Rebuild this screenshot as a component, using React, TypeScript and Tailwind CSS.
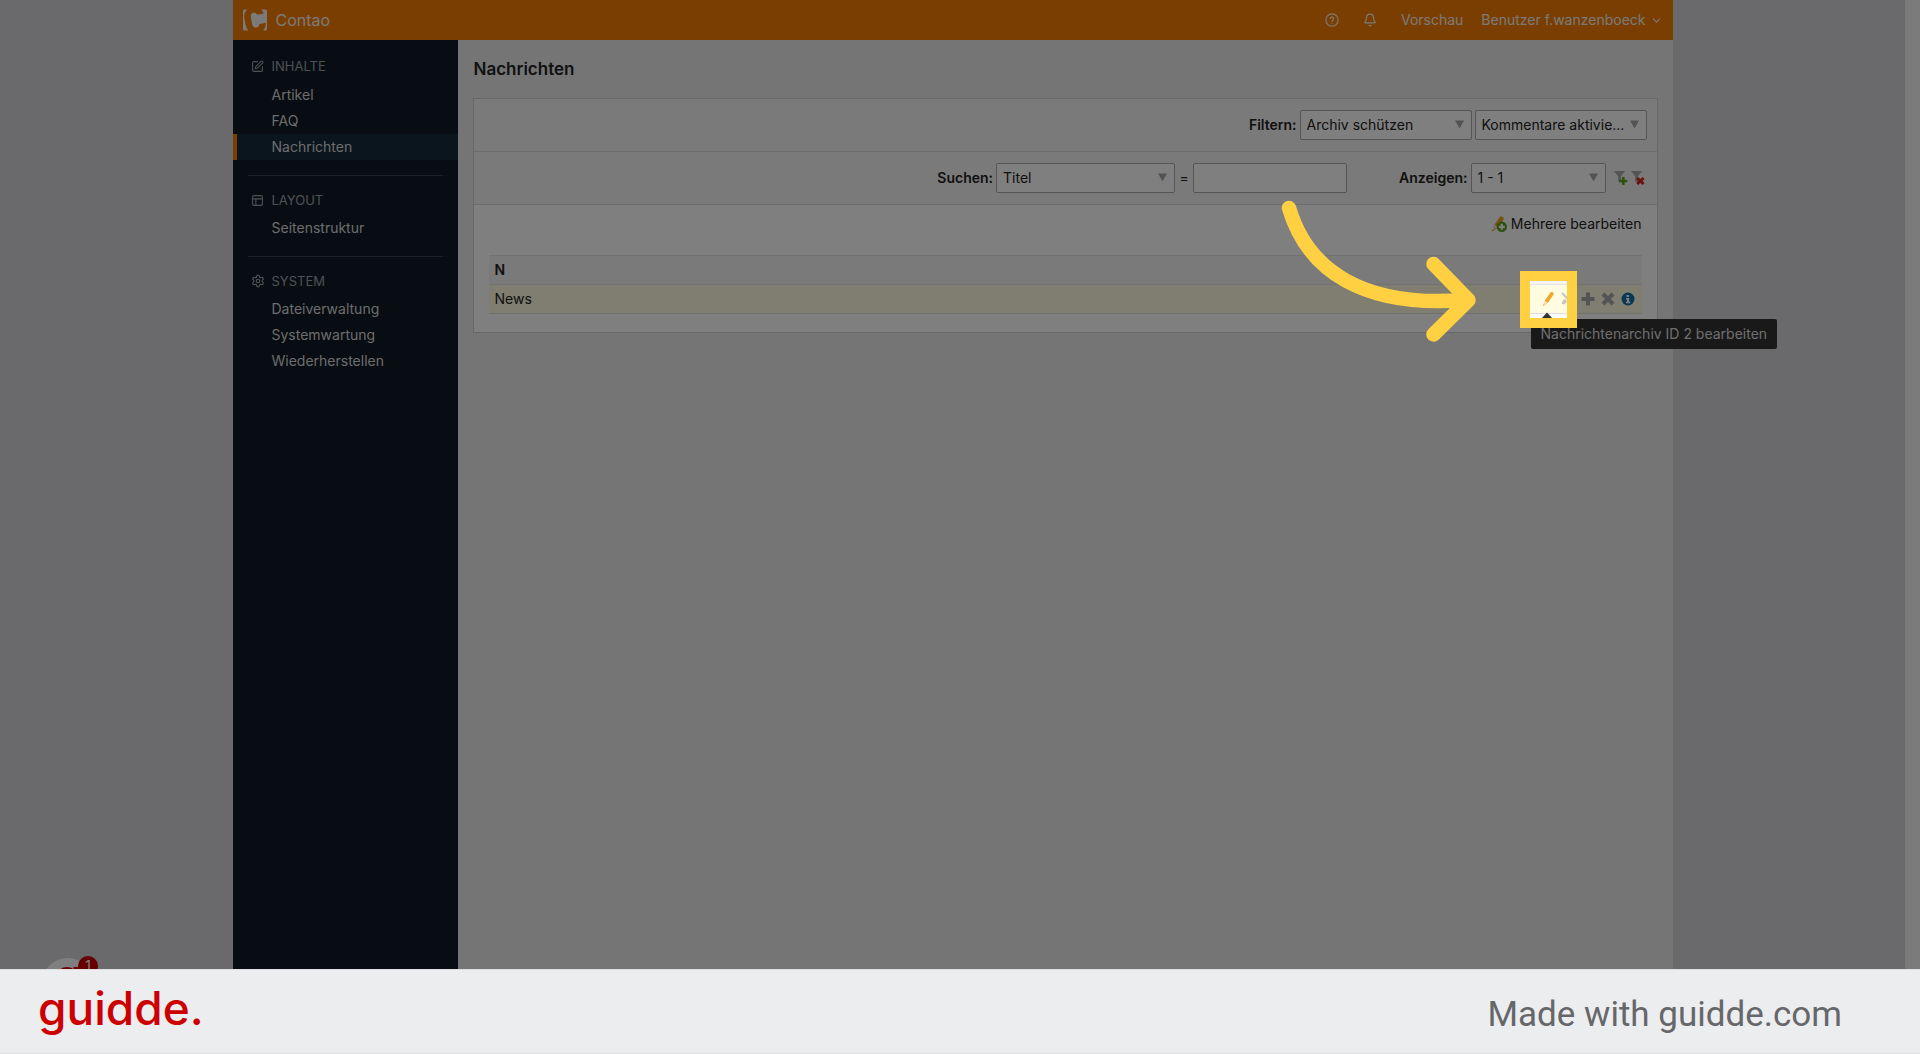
import type { ReactNode } from "react";
import { Bell, ChevronDown, PanelsTopLeft, Settings, SquarePen } from "lucide-react";
import { SiContao } from "react-icons/si";

type Group = { title: string; icon: ReactNode; items: string[] };

const groups: Group[] = [
  { title: "INHALTE", icon: <SquarePen size={13} strokeWidth={2} />, items: ["Artikel", "FAQ", "Nachrichten"] },
  { title: "LAYOUT", icon: <PanelsTopLeft size={13} strokeWidth={2} />, items: ["Seitenstruktur"] },
  { title: "SYSTEM", icon: <Settings size={14} strokeWidth={2} />, items: ["Dateiverwaltung", "Systemwartung", "Wiederherstellen"] },
];

function HelpIcon() {
  return (
    <svg width="14" height="14" viewBox="0 0 24 24" fill="none" stroke="currentColor" strokeWidth="2" strokeLinecap="round" strokeLinejoin="round">
      <circle cx="12" cy="12" r="10.5" />
      <path d="M9 9.3a3 3 0 0 1 5.9.8c0 2-2.9 2.4-2.9 4.2M12 17.4v.1" />
    </svg>
  );
}

function Pencil() {
  return (
    <svg width="16" height="16" viewBox="0 0 16 16">
      <path d="M10.3 1.6c.5-.7 1.2-.9 1.9-.5l1 .6c.7.5.8 1.2.4 1.9l-5.8 8.3-3.200-2z" fill="#f0a830" />
      <path d="M4.200 10.500l3 2-3.600 2.400-.5-.3z" fill="#f7d9a6" />
      <path d="M3.300 13.200l1.300.9-1.700 1z" fill="#f0a830" />
    </svg>
  );
}

function PencilPlus() {
  return (
    <svg width="16" height="16" viewBox="0 0 16 16">
      <path d="M8.800.9c.4-.7 1.100-.9 1.800-.5l1.600 1c.7.4.8 1.100.4 1.800L7.500 11.500 3.300 9z" fill="#f0a020" />
      <path d="M2.800 9.800l3.700 2.400-4.200 2.800z" fill="#e8c9a0" />
      <path d="M1.200 13.300l2 1.300-2.300 1z" fill="#f0a020" />
      <circle cx="10.800" cy="10.800" r="4.200" fill="#fff" stroke="#58a618" strokeWidth="2" />
      <circle cx="10.800" cy="10.800" r="4" fill="#58a618" />
      <path d="M10.800 7.800v6M7.800 10.800h6" stroke="#fff" strokeWidth="2.200" />
    </svg>
  );
}

function Funnel({ reset }: { reset?: boolean }) {
  return (
    <svg width="14" height="16" viewBox="0 0 14 16">
      <path d="M0 1h11L7 6.200V13L4.200 11V6.200z" fill="#a9a9ac" />
      {reset ? (
        <path d="M6.200 8l6.400 6M12.600 8l-6.400 6" stroke="#d5251b" strokeWidth="3" />
      ) : (
        <path d="M9.300 7v8M5.300 11h8" stroke="#5ba51a" strokeWidth="2.600" />
      )}
    </svg>
  );
}

function Select({ label, value, width }: { label: string; value: string; width: string }) {
  return (
    <span className={`relative block ${width}`}>
      <select
        aria-label={label}
        className="block h-[30px] w-full appearance-none rounded-xs border border-[#aaaaaa] bg-white pr-5 pl-1.5 text-sm text-[#222222]"
      >
        <option>{value}</option>
      </select>
      <svg className="pointer-events-none absolute top-2.5 right-2" width="9" height="9" viewBox="0 0 9 9">
        <path d="M0 .5h9L4.500 8.500z" fill="#a6a6a6" />
      </svg>
    </span>
  );
}

function Sidebar() {
  return (
    <nav className="w-[225px] shrink-0 bg-[#101a27] text-sm text-[#d8d8d8]">
      {groups.map((g, i) => (
        <section key={g.title}>
          {i > 0 && <hr className="mx-[15px] border-[#3a444c]" />}
          <h2
            className={`flex items-center gap-[7px] pl-[18px] text-[13px] leading-4 text-[#9da3a8] ${i === 0 ? "pt-[18px] pb-2" : "pt-4 pb-[7px]"}`}
          >
            <span className="flex w-3.5 justify-center">{g.icon}</span>
            {g.title}
          </h2>
          <ul className="pb-[15px]">
            {g.items.map((item) => (
              <li key={item}>
                <a
                  href="#"
                  className={`block border-l-4 pl-[35px] leading-[26px] ${item === "Nachrichten" ? "border-[#f47c00] bg-[#172b3b]" : "border-transparent"}`}
                >
                  {item}
                </a>
              </li>
            ))}
          </ul>
        </section>
      ))}
    </nav>
  );
}

function Spotlight() {
  return (
    <>
      <span className="pointer-events-none absolute top-7 -left-[9px] z-10 rounded-xs bg-[#333333] px-2.5 text-sm leading-[30px] whitespace-nowrap text-[#dddddd]">
        Nachrichtenarchiv ID 2 bearbeiten
        <svg className="absolute -top-[7px] left-2.5" width="12" height="7" viewBox="0 0 12 7">
          <path d="M0 7l6-6.500L12 7z" fill="#333333" />
        </svg>
      </span>
      <span className="pointer-events-none absolute -top-2.5 -left-2.5 z-20 size-[37px] shadow-[0_0_0_9999px_rgba(0,0,0,0.5)]" />
      <span className="pointer-events-none absolute -top-5 -left-5 z-30 size-[57px] border-10 border-[#ffd042]" />
      <svg
        className="pointer-events-none absolute -top-[111px] -left-[280px] z-30 max-w-none"
        width="260"
        height="180"
        viewBox="0 0 260 180"
        fill="none"
        stroke="#ffd042"
        strokeWidth="14.500"
        strokeLinecap="round"
        strokeLinejoin="round"
      >
        <path d="M29 28C48 92 105 128 205 120" />
        <path d="M173.500 84L208.500 120L173.500 154.500" />
      </svg>
    </>
  );
}

function RowActions() {
  return (
    <div className="flex items-center justify-end gap-1">
      <div className="relative size-4">
        <button aria-label="Nachrichtenarchiv ID 2 bearbeiten" className="block size-4">
          <Pencil />
        </button>
        <Spotlight />
      </div>
      <button aria-label="Einstellungen" className="size-4">
        <svg width="16" height="16" viewBox="0 0 16 16" stroke="#c3c3c8" strokeWidth="1.800" fill="none">
          <path d="M2 2l11 11" />
          <path d="M13 2.500L8 7.500" />
          <path d="M1.500 12.500l2-4h3v3l-2.500 2z" fill="#c3c3c8" stroke="none" />
        </svg>
      </button>
      <button aria-label="Duplizieren" className="size-4">
        <svg width="16" height="16" viewBox="0 0 16 16">
          <path d="M8 1.500v13M1.500 8h13" stroke="#a9a9ac" strokeWidth="4" />
        </svg>
      </button>
      <button aria-label="Löschen" className="size-4">
        <svg width="16" height="16" viewBox="0 0 16 16">
          <path d="M3 3l10 10M13 3L3 13" stroke="#a9a9ac" strokeWidth="4" />
        </svg>
      </button>
      <button aria-label="Details" className="size-4">
        <svg width="16" height="16" viewBox="0 0 16 16">
          <circle cx="8" cy="8" r="6.500" fill="#0f6ea6" />
          <path d="M6.500 4h2.600v2H6.500zM6 7h3.200v3.800h1v1.400H6v-1.400h.9V8.400H6z" fill="#fff" />
        </svg>
      </button>
    </div>
  );
}

function Main() {
  return (
    <main className="flex-1 bg-[#eaeaea] px-[15px]">
      <h1 className="py-[18px] pl-px text-[17px] leading-[22px] font-semibold text-[#222222]">Nachrichten</h1>
      <div className="border border-[#d0d0d2] bg-white text-sm text-[#222222]">
        <div className="flex items-center justify-end gap-[3px] border-b border-[#dddddd] bg-[#f4f4f4] py-[11px] pr-2.5">
          <strong className="font-semibold">Filtern:</strong>
          <Select label="Archiv schützen" value="Archiv schützen" width="w-[172px]" />
          <Select label="Kommentare" value="Kommentare aktivie..." width="w-[172px]" />
        </div>
        <div className="flex items-center justify-end gap-[3px] border-b border-[#dddddd] bg-[#f4f4f4] py-[11px] pr-3">
          <strong className="font-semibold">Suchen:</strong>
          <Select label="Suchen" value="Titel" width="w-[179px]" />
          <span className="w-3 text-center">=</span>
          <input aria-label="Suchbegriff" className="h-[30px] w-[154px] rounded-xs border border-[#aaaaaa] bg-white px-1.5" />
          <strong className="ml-[49px] font-semibold">Anzeigen:</strong>
          <Select label="Anzeigen" value="1 - 1" width="w-[135px]" />
          <button aria-label="Filter anwenden" className="ml-[5px]">
            <Funnel />
          </button>
          <button aria-label="Filter zurücksetzen">
            <Funnel reset />
          </button>
        </div>
        <div className="flex h-[50px] justify-end pt-[9px] pr-[15px]">
          <a href="#" className="flex h-5 items-center gap-1">
            <PencilPlus />
            Mehrere bearbeiten
          </a>
        </div>
        <div className="px-[15px] pb-[18px]">
          <table className="w-full border-collapse">
            <thead>
              <tr className="border-y border-[#e4e4e4] bg-[#f4f4f4]">
                <th colSpan={2} className="h-[29px] px-1.5 text-left font-semibold">N</th>
              </tr>
            </thead>
            <tbody>
              <tr className="border-b border-[#dedede] bg-[#fffce1]">
                <td className="h-[29px] px-1.5">News</td>
                <td className="px-1.5">
                  <RowActions />
                </td>
              </tr>
            </tbody>
          </table>
        </div>
      </div>
    </main>
  );
}

export default function App() {
  return (
    <div className="flex h-screen flex-col font-['Inter',sans-serif]">
      <div className="relative flex flex-1 overflow-hidden bg-[#d4d4d8]">
        <div className="flex flex-1 justify-center">
          <div className="flex w-full max-w-[1440px] flex-col">
            <header className="flex h-10 shrink-0 items-center bg-[#f47c00] px-2.5 text-sm text-[#f4f4f4]">
              <a href="#" className="flex items-center gap-[9px] text-base">
                <SiContao size={24} />
                Contao
              </a>
              <div className="ml-auto flex items-center">
                <a href="#" aria-label="Hilfe"><HelpIcon /></a>
                <a href="#" aria-label="Benachrichtigungen" className="ml-6"><Bell size={14} /></a>
                <a href="#" className="ml-6">Vorschau</a>
                <button className="ml-[18px] flex items-center gap-1">
                  Benutzer f.wanzenboeck
                  <ChevronDown size={13} strokeWidth={2} />
                </button>
              </div>
            </header>
            <div className="flex flex-1">
              <Sidebar />
              <Main />
            </div>
          </div>
        </div>
        <div className="w-[15px] shrink-0 bg-[#f6f6f6]" />
        <div className="absolute -bottom-10 left-[42px] size-[51px] rounded-full bg-white shadow-lg">
          <svg className="absolute top-2 left-3.5" width="24" height="30" viewBox="0 0 24 30" fill="none" stroke="#dd0000" strokeWidth="5">
            <circle cx="11" cy="12" r="8.500" />
            <path d="M20 1v20" />
          </svg>
          <span className="absolute -top-0.5 right-[-5px] size-5 rounded-full bg-[#cc0000] text-center text-sm leading-5 text-white">1</span>
        </div>
      </div>
      <footer className="flex h-[85px] shrink-0 items-center justify-between border-y border-[#dfdfe1] bg-[#ecedef] pr-[78px] pl-[38px]">
        <a href="#" className="pb-2 text-[46px] leading-[56px] font-medium text-[#cc0000]">guidde.</a>
        <span className="pt-1.5 font-['Roboto',sans-serif] text-[35px] leading-10 text-[#66676a]">Made with guidde.com</span>
      </footer>
    </div>
  );
}
